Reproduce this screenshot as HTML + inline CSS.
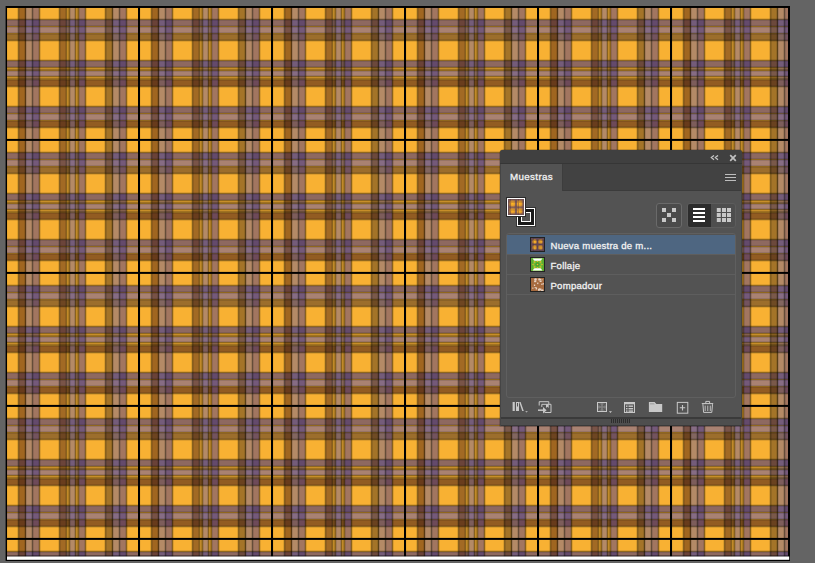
<!DOCTYPE html>
<html><head><meta charset="utf-8">
<style>
html,body{margin:0;padding:0;}
body{width:815px;height:563px;overflow:hidden;background:#646464;position:relative;font-family:"Liberation Sans",sans-serif;}
.a{position:absolute;}
#panel{left:500px;top:150px;width:242px;height:276px;background:#535353;border-radius:3px 3px 0 0;overflow:hidden;box-shadow:0 0 0 0.5px rgba(0,0,0,0.35);}
.lbl{color:#f2f2f2;font-size:9.6px;white-space:nowrap;line-height:12px;-webkit-text-stroke:0.3px #f2f2f2;letter-spacing:0.22px}
</style></head><body>
<svg width="815" height="563" viewBox="0 0 815 563" style="position:absolute;left:0;top:0">
<defs><pattern id="pl" patternUnits="userSpaceOnUse" x="6" y="7" width="133" height="133"><rect width="133" height="133" fill="#f8b133"/><rect x="13" y="0" width="7" height="133" fill="#a06620"/><rect x="20" y="0" width="7" height="133" fill="#b48a66"/><rect x="27" y="0" width="6" height="133" fill="#a27660"/><rect x="54" y="0" width="6" height="133" fill="#a26a24"/><rect x="64" y="0" width="5" height="133" fill="#b48a66"/><rect x="73" y="0" width="6" height="133" fill="#a27660"/><rect x="100" y="0" width="7" height="133" fill="#a47428"/><rect x="107" y="0" width="7" height="133" fill="#b48a66"/><rect x="114" y="0" width="6" height="133" fill="#a27660"/><rect x="0" y="13" width="133" height="6" fill="#8e6960"/><rect x="0" y="20" width="133" height="6" fill="#a98272"/><rect x="0" y="27" width="133" height="6" fill="#9c6e2c"/><rect x="0" y="54" width="133" height="6" fill="#8e6960"/><rect x="0" y="64" width="133" height="5" fill="#a98272"/><rect x="0" y="73" width="133" height="6" fill="#925c22"/><rect x="0" y="100" width="133" height="6" fill="#8e6960"/><rect x="0" y="107" width="133" height="6" fill="#a98272"/><rect x="0" y="114" width="133" height="6" fill="#925c22"/><rect x="13" y="13" width="7" height="6" fill="#6a4238"/><rect x="13" y="20" width="7" height="6" fill="#785246"/><rect x="13" y="27" width="7" height="6" fill="#6d4420"/><rect x="13" y="54" width="7" height="6" fill="#6a4238"/><rect x="13" y="64" width="7" height="5" fill="#785246"/><rect x="13" y="73" width="7" height="6" fill="#683b1b"/><rect x="13" y="100" width="7" height="6" fill="#6a4238"/><rect x="13" y="107" width="7" height="6" fill="#785246"/><rect x="13" y="114" width="7" height="6" fill="#683b1b"/><rect x="20" y="13" width="7" height="6" fill="#745c7a"/><rect x="20" y="20" width="7" height="6" fill="#866c84"/><rect x="20" y="27" width="7" height="6" fill="#826660"/><rect x="20" y="54" width="7" height="6" fill="#745c7a"/><rect x="20" y="64" width="7" height="5" fill="#866c84"/><rect x="20" y="73" width="7" height="6" fill="#7d5d5b"/><rect x="20" y="100" width="7" height="6" fill="#745c7a"/><rect x="20" y="107" width="7" height="6" fill="#866c84"/><rect x="20" y="114" width="7" height="6" fill="#7d5d5b"/><rect x="27" y="13" width="6" height="6" fill="#644a6c"/><rect x="27" y="20" width="6" height="6" fill="#74597a"/><rect x="27" y="27" width="6" height="6" fill="#73535e"/><rect x="27" y="54" width="6" height="6" fill="#644a6c"/><rect x="27" y="64" width="6" height="5" fill="#74597a"/><rect x="27" y="73" width="6" height="6" fill="#6e4a59"/><rect x="27" y="100" width="6" height="6" fill="#644a6c"/><rect x="27" y="107" width="6" height="6" fill="#74597a"/><rect x="27" y="114" width="6" height="6" fill="#6e4a59"/><rect x="54" y="13" width="6" height="6" fill="#6b443a"/><rect x="54" y="20" width="6" height="6" fill="#795448"/><rect x="54" y="27" width="6" height="6" fill="#6e4622"/><rect x="54" y="54" width="6" height="6" fill="#6b443a"/><rect x="54" y="64" width="6" height="5" fill="#795448"/><rect x="54" y="73" width="6" height="6" fill="#693d1d"/><rect x="54" y="100" width="6" height="6" fill="#6b443a"/><rect x="54" y="107" width="6" height="6" fill="#795448"/><rect x="54" y="114" width="6" height="6" fill="#693d1d"/><rect x="64" y="13" width="5" height="6" fill="#745c7a"/><rect x="64" y="20" width="5" height="6" fill="#866c84"/><rect x="64" y="27" width="5" height="6" fill="#826660"/><rect x="64" y="54" width="5" height="6" fill="#745c7a"/><rect x="64" y="64" width="5" height="5" fill="#866c84"/><rect x="64" y="73" width="5" height="6" fill="#7d5d5b"/><rect x="64" y="100" width="5" height="6" fill="#745c7a"/><rect x="64" y="107" width="5" height="6" fill="#866c84"/><rect x="64" y="114" width="5" height="6" fill="#7d5d5b"/><rect x="73" y="13" width="6" height="6" fill="#644a6c"/><rect x="73" y="20" width="6" height="6" fill="#74597a"/><rect x="73" y="27" width="6" height="6" fill="#73535e"/><rect x="73" y="54" width="6" height="6" fill="#644a6c"/><rect x="73" y="64" width="6" height="5" fill="#74597a"/><rect x="73" y="73" width="6" height="6" fill="#6e4a59"/><rect x="73" y="100" width="6" height="6" fill="#644a6c"/><rect x="73" y="107" width="6" height="6" fill="#74597a"/><rect x="73" y="114" width="6" height="6" fill="#6e4a59"/><rect x="100" y="13" width="7" height="6" fill="#6c493c"/><rect x="100" y="20" width="7" height="6" fill="#7a594a"/><rect x="100" y="27" width="7" height="6" fill="#6f4b24"/><rect x="100" y="54" width="7" height="6" fill="#6c493c"/><rect x="100" y="64" width="7" height="5" fill="#7a594a"/><rect x="100" y="73" width="7" height="6" fill="#6a421f"/><rect x="100" y="100" width="7" height="6" fill="#6c493c"/><rect x="100" y="107" width="7" height="6" fill="#7a594a"/><rect x="100" y="114" width="7" height="6" fill="#6a421f"/><rect x="107" y="13" width="7" height="6" fill="#745c7a"/><rect x="107" y="20" width="7" height="6" fill="#866c84"/><rect x="107" y="27" width="7" height="6" fill="#826660"/><rect x="107" y="54" width="7" height="6" fill="#745c7a"/><rect x="107" y="64" width="7" height="5" fill="#866c84"/><rect x="107" y="73" width="7" height="6" fill="#7d5d5b"/><rect x="107" y="100" width="7" height="6" fill="#745c7a"/><rect x="107" y="107" width="7" height="6" fill="#866c84"/><rect x="107" y="114" width="7" height="6" fill="#7d5d5b"/><rect x="114" y="13" width="6" height="6" fill="#644a6c"/><rect x="114" y="20" width="6" height="6" fill="#74597a"/><rect x="114" y="27" width="6" height="6" fill="#73535e"/><rect x="114" y="54" width="6" height="6" fill="#644a6c"/><rect x="114" y="64" width="6" height="5" fill="#74597a"/><rect x="114" y="73" width="6" height="6" fill="#6e4a59"/><rect x="114" y="100" width="6" height="6" fill="#644a6c"/><rect x="114" y="107" width="6" height="6" fill="#74597a"/><rect x="114" y="114" width="6" height="6" fill="#6e4a59"/><rect x="11.75" y="0" width="1.50" height="133" fill="rgba(0,0,0,0.45)"/><rect x="18.75" y="0" width="1.50" height="133" fill="rgba(0,0,0,0.45)"/><rect x="25.75" y="0" width="1.50" height="133" fill="rgba(0,0,0,0.45)"/><rect x="32.75" y="0" width="1.50" height="133" fill="rgba(0,0,0,0.45)"/><rect x="52.75" y="0" width="1.50" height="133" fill="rgba(0,0,0,0.45)"/><rect x="59.75" y="0" width="1.50" height="133" fill="rgba(0,0,0,0.45)"/><rect x="62.75" y="0" width="1.50" height="133" fill="rgba(0,0,0,0.45)"/><rect x="68.75" y="0" width="1.50" height="133" fill="rgba(0,0,0,0.45)"/><rect x="71.75" y="0" width="1.50" height="133" fill="rgba(0,0,0,0.45)"/><rect x="78.75" y="0" width="1.50" height="133" fill="rgba(0,0,0,0.45)"/><rect x="98.75" y="0" width="1.50" height="133" fill="rgba(0,0,0,0.45)"/><rect x="105.75" y="0" width="1.50" height="133" fill="rgba(0,0,0,0.45)"/><rect x="112.75" y="0" width="1.50" height="133" fill="rgba(0,0,0,0.45)"/><rect x="119.75" y="0" width="1.50" height="133" fill="rgba(0,0,0,0.45)"/><rect x="0" y="11.75" width="133" height="1.50" fill="rgba(0,0,0,0.42)"/><rect x="0" y="18.75" width="133" height="1.50" fill="rgba(0,0,0,0.42)"/><rect x="0" y="25.75" width="133" height="1.50" fill="rgba(0,0,0,0.42)"/><rect x="0" y="32.75" width="133" height="1.50" fill="rgba(0,0,0,0.42)"/><rect x="0" y="52.75" width="133" height="1.50" fill="rgba(0,0,0,0.42)"/><rect x="0" y="59.75" width="133" height="1.50" fill="rgba(0,0,0,0.42)"/><rect x="0" y="62.75" width="133" height="1.50" fill="rgba(0,0,0,0.42)"/><rect x="0" y="68.75" width="133" height="1.50" fill="rgba(0,0,0,0.42)"/><rect x="0" y="71.75" width="133" height="1.50" fill="rgba(0,0,0,0.42)"/><rect x="0" y="78.75" width="133" height="1.50" fill="rgba(0,0,0,0.42)"/><rect x="0" y="98.75" width="133" height="1.50" fill="rgba(0,0,0,0.42)"/><rect x="0" y="105.75" width="133" height="1.50" fill="rgba(0,0,0,0.42)"/><rect x="0" y="112.75" width="133" height="1.50" fill="rgba(0,0,0,0.42)"/><rect x="0" y="119.75" width="133" height="1.50" fill="rgba(0,0,0,0.42)"/><rect x="61" y="0" width="1" height="133" fill="rgba(0,0,0,0.12)"/><rect x="62" y="0" width="1" height="133" fill="rgba(0,0,0,0.22)"/><rect x="0" y="61" width="133" height="1" fill="rgba(0,0,0,0.10)"/><rect x="0" y="62" width="133" height="1" fill="rgba(0,0,0,0.28)"/><rect x="70" y="0" width="1" height="133" fill="rgba(0,0,0,0.12)"/><rect x="71" y="0" width="1" height="133" fill="rgba(0,0,0,0.22)"/><rect x="0" y="70" width="133" height="1" fill="rgba(0,0,0,0.10)"/><rect x="0" y="71" width="133" height="1" fill="rgba(0,0,0,0.28)"/><rect x="0" y="0" width="1.05" height="133" fill="#000"/><rect x="132" y="0" width="1" height="133" fill="#000"/><rect x="0" y="0" width="133" height="0.9" fill="#000"/><rect x="0" y="131.9" width="133" height="1.1" fill="#000"/></pattern></defs>
<g><rect x="5.6" y="6" width="784.4" height="555" fill="#000"/>
<rect x="7" y="7.7" width="781" height="548.8" fill="url(#pl)"/>
<rect x="7" y="555.3" width="781" height="1.2" fill="rgba(0,0,0,0.5)"/><rect x="7" y="556.5" width="782.2" height="3.3" fill="#fff"/></g>
</svg>
<div id="panel" class="a">
  <!-- header -->
  <div class="a" style="left:0;top:0;width:242px;height:13px;background:#404040"></div>
  <div class="a" style="left:0;top:13px;width:242px;height:1px;background:#363636"></div>
  <!-- collapse << -->
  <svg class="a" style="left:210px;top:5px" width="10" height="7" viewBox="0 0 10 7">
    <path d="M4 0.4 L1.3 2.6 L4 4.8 M8 0.4 L5.3 2.6 L8 4.8" fill="none" stroke="#c4c4c4" stroke-width="1.25"/>
  </svg>
  <!-- close x -->
  <svg class="a" style="left:229px;top:4px" width="8" height="8" viewBox="0 0 8 8">
    <path d="M1.2 1.2 L6.8 6.8 M6.8 1.2 L1.2 6.8" fill="none" stroke="#c0c0c0" stroke-width="1.7"/>
  </svg>
  <!-- tab row -->
  <div class="a" style="left:0;top:14px;width:242px;height:27px;background:#424242"></div>
  <div class="a" style="left:62px;top:40px;width:180px;height:1px;background:#3b3b3b"></div>
  <div class="a" style="left:62px;top:14px;width:1px;height:27px;background:#3d3d3d"></div>
  <div class="a" style="left:0;top:14px;width:62px;height:28px;background:#535353"></div>
  <div class="a lbl" style="left:10px;top:20.5px;font-size:9.8px;letter-spacing:0.35px">Muestras</div>
  <!-- menu -->
  <div class="a" style="left:225px;top:24px;width:11px;height:1px;background:#bdbdbd"></div>
  <div class="a" style="left:225px;top:27px;width:11px;height:1px;background:#bdbdbd"></div>
  <div class="a" style="left:225px;top:30px;width:11px;height:1px;background:#bdbdbd"></div>

  <!-- fill/stroke icon -->
  <div class="a" style="left:16px;top:57px;width:20px;height:20px;background:#333"></div>
  <div class="a" style="left:17px;top:58px;width:18px;height:18px;background:#fff"></div>
  <div class="a" style="left:18px;top:59px;width:16px;height:16px;background:#1a1a1a"></div>
  <div class="a" style="left:21px;top:62px;width:10px;height:10px;background:#fff"></div>
  <div class="a" style="left:22px;top:63px;width:8px;height:8px;background:#535353"></div>

  <div class="a" style="left:6px;top:47px;width:20px;height:20px;background:#2a2a2a"></div>
  <div class="a" style="left:7px;top:48px;width:18px;height:18px;background:#fff"></div>
  <svg class="a" style="left:8px;top:49px" width="16" height="16" viewBox="0 0 16 16">
    <defs><radialGradient id="ys"><stop offset="0" stop-color="#ffb822"/><stop offset="0.45" stop-color="#e8a030"/><stop offset="1" stop-color="#e8a030" stop-opacity="0"/></radialGradient></defs>
    <rect width="16" height="16" fill="#9a6a3c"/>
    <circle cx="4.5" cy="4.5" r="4.5" fill="url(#ys)"/><circle cx="11.5" cy="4.5" r="4.5" fill="url(#ys)"/>
    <circle cx="4.5" cy="11.5" r="4.5" fill="url(#ys)"/><circle cx="11.5" cy="11.5" r="4.5" fill="url(#ys)"/>
    <g fill="#54406a" opacity="0.55">
    <rect x="0" y="0" width="1.5" height="16"/><rect x="7" y="0" width="2" height="16"/><rect x="14.5" y="0" width="1.5" height="16"/>
    <rect x="0" y="0" width="16" height="1.5"/><rect x="0" y="7.5" width="16" height="2"/><rect x="0" y="14.5" width="16" height="1.5"/>
    </g>
    <g fill="#4a3040" opacity="0.35">
    <rect x="2" y="0" width="1" height="16"/><rect x="10" y="0" width="1" height="16"/>
    <rect x="0" y="2.5" width="16" height="1"/><rect x="0" y="10.5" width="16" height="1"/>
    </g>
  </svg>

  <!-- view buttons -->
  <div class="a" style="left:156px;top:53px;width:24px;height:23px;border:1px solid #6a6a6a;border-radius:3px;background:#4b4b4b"></div>
  <div class="a" style="left:161.5px;top:58px;width:4px;height:4px;background:#c8c8c8"></div>
  <div class="a" style="left:172px;top:58px;width:4px;height:4px;background:#c8c8c8"></div>
  <div class="a" style="left:167px;top:63px;width:4px;height:4px;background:#c8c8c8"></div>
  <div class="a" style="left:161.5px;top:68px;width:4px;height:4px;background:#c8c8c8"></div>
  <div class="a" style="left:172px;top:68px;width:4px;height:4px;background:#c8c8c8"></div>

  <div class="a" style="left:187px;top:53px;width:47px;height:23px;border:1px solid #5c5c5c;border-radius:3px;background:#4e4e4e"></div>
  <div class="a" style="left:188px;top:54px;width:23px;height:23px;background:#2c2c2c;border-radius:2px 0 0 2px"></div>
  <div class="a" style="left:193px;top:58px;width:12px;height:2px;background:#fff"></div>
  <div class="a" style="left:193px;top:62px;width:12px;height:2px;background:#fff"></div>
  <div class="a" style="left:193px;top:66px;width:12px;height:2px;background:#fff"></div>
  <div class="a" style="left:193px;top:70px;width:12px;height:2px;background:#fff"></div>
  <svg class="a" style="left:216px;top:58px" width="16" height="15" viewBox="0 0 16 15">
    <g fill="#c8c8c8">
    <rect x="0.8" y="0" width="4" height="4"/><rect x="6" y="0" width="4" height="4"/><rect x="11" y="0" width="4" height="4"/>
    <rect x="0.8" y="5" width="4" height="4"/><rect x="6" y="5" width="4" height="4"/><rect x="11" y="5" width="4" height="4"/>
    <rect x="0.8" y="10" width="4" height="4"/><rect x="6" y="10" width="4" height="4"/><rect x="11" y="10" width="4" height="4"/>
    </g>
  </svg>

  <!-- list box -->
  <div class="a" style="left:6px;top:83px;width:228px;height:163px;border:1px solid #5f5f5f;border-radius:3px;"></div>
  <div class="a" style="left:7px;top:85px;width:228px;height:19px;background:#4e6681"></div>
  <div class="a" style="left:7px;top:104px;width:228px;height:1px;background:#5e5e5e"></div>
  <div class="a" style="left:7px;top:124px;width:228px;height:1px;background:#5e5e5e"></div>
  <div class="a" style="left:7px;top:144px;width:228px;height:1px;background:#5e5e5e"></div>

  <!-- thumbs -->
  <div class="a" style="left:30px;top:87px;width:15px;height:15px;background:#222"></div>
  <svg class="a" style="left:31px;top:88px" width="13" height="13" viewBox="0 0 16 16">
    <rect width="16" height="16" fill="#7e5840"/>
    <circle cx="4.5" cy="4.5" r="3.6" fill="url(#ys)"/><circle cx="11.5" cy="4.5" r="3.6" fill="url(#ys)"/>
    <circle cx="4.5" cy="11.5" r="3.6" fill="url(#ys)"/><circle cx="11.5" cy="11.5" r="3.6" fill="url(#ys)"/>
    <g fill="#4a3864" opacity="0.55">
    <rect x="0" y="0" width="1.5" height="16"/><rect x="7" y="0" width="2" height="16"/><rect x="14.5" y="0" width="1.5" height="16"/>
    <rect x="0" y="0" width="16" height="1.5"/><rect x="0" y="7" width="16" height="2"/><rect x="0" y="14.5" width="16" height="1.5"/>
    </g>
    <g fill="#3a2830" opacity="0.3">
    <rect x="2.5" y="0" width="1" height="16"/><rect x="10.5" y="0" width="1" height="16"/>
    <rect x="0" y="2.5" width="16" height="1"/><rect x="0" y="10.5" width="16" height="1"/>
    </g>
  </svg>
  <div class="a lbl" style="left:50.5px;top:90px">Nueva muestra de m...</div>

  <div class="a" style="left:30px;top:107px;width:15px;height:15px;background:#222"></div>
  <svg class="a" style="left:31px;top:108px" width="13" height="13" viewBox="0 0 13 13">
    <rect width="13" height="13" fill="#70bc36"/>
    <rect x="0" y="0" width="2" height="13" fill="#5aac30"/><rect x="11" y="0" width="2" height="13" fill="#5aac30"/>
    <path d="M1.5 0.6 H11.5 L9.5 2.8 H3.5 Z" fill="#fff"/>
    <path d="M1.5 12.4 H11.5 L9.5 10.2 H3.5 Z" fill="#fff"/>
    <circle cx="6.5" cy="6.5" r="2.2" fill="#48a030"/>
    <g fill="#f2b424"><circle cx="6.5" cy="6.5" r="0.8"/><circle cx="3.6" cy="4" r="0.8"/><circle cx="9.4" cy="4" r="0.8"/><circle cx="3.6" cy="9" r="0.8"/><circle cx="9.4" cy="9" r="0.8"/>
    <circle cx="2" cy="6.5" r="0.7"/><circle cx="11" cy="6.5" r="0.7"/><circle cx="6.5" cy="3.4" r="0.6"/><circle cx="6.5" cy="9.6" r="0.6"/></g>
  </svg>
  <div class="a lbl" style="left:50.5px;top:110px">Follaje</div>

  <div class="a" style="left:30px;top:127px;width:15px;height:15px;background:#222"></div>
  <svg class="a" style="left:31px;top:128px" width="13" height="13" viewBox="0 0 13 13">
    <rect width="13" height="13" fill="#a66a3e"/>
    <g fill="#f2e6dc" opacity="0.85"><rect x="2.9" y="6.5" width="1.3" height="1.5"/><rect x="7.5" y="0.8" width="0.8" height="1.8"/><rect x="3.1" y="2.8" width="2.2" height="1.4"/><rect x="10.0" y="5.7" width="1.7" height="1.0"/><rect x="7.6" y="10.4" width="1.5" height="1.7"/><rect x="8.1" y="0.8" width="1.9" height="1.5"/><rect x="3.6" y="0.4" width="2.0" height="1.4"/><rect x="8.6" y="10.5" width="1.8" height="1.9"/><rect x="4.7" y="9.6" width="1.4" height="1.9"/><rect x="10.5" y="1.2" width="1.0" height="1.1"/><rect x="11.6" y="5.2" width="1.7" height="1.2"/><rect x="6.1" y="4.6" width="1.3" height="1.5"/><rect x="7.0" y="10.9" width="1.8" height="1.9"/><rect x="10.3" y="11.9" width="1.7" height="1.0"/><rect x="10.3" y="11.6" width="2.1" height="1.5"/><rect x="8.6" y="2.5" width="2.0" height="1.5"/><rect x="3.4" y="0.8" width="2.0" height="2.0"/><rect x="1.1" y="9.6" width="1.4" height="1.0"/><rect x="3.5" y="9.2" width="2.0" height="0.9"/><rect x="7.4" y="0.5" width="1.8" height="1.2"/><rect x="10.6" y="11.8" width="1.5" height="2.0"/><rect x="3.7" y="0.9" width="1.6" height="0.8"/></g>
  </svg>
  <div class="a lbl" style="left:50.5px;top:130px">Pompadour</div>

  <!-- footer icons -->
  <svg class="a" style="left:10.8px;top:250.4px" width="18" height="14" viewBox="0 0 18 14">
    <g fill="#c8c8c8">
    <rect x="1.6" y="2" width="2.2" height="9"/>
    <path d="M5 2 H8 V11 H5 Z M6 3 V6.5 H7 V3 Z" fill-rule="evenodd"/>
    <path d="M8.2 2 L9.6 2 L12.8 11 L11.2 11 Z"/>
    <path d="M14.2 11.2 L16.9 11.2 L15.55 12.6 Z"/>
    </g>
  </svg>
  <svg class="a" style="left:37px;top:250px" width="16" height="15" viewBox="0 0 16 15">
    <g fill="none" stroke="#c8c8c8" stroke-width="1">
    <path d="M2.2 5.5 V1.7 H11.8 V4"/>
    <path d="M4.8 7 V4.3 H14 V12.5 H7.5"/>
    </g>
    <path d="M1 10.2 H7" fill="none" stroke="#c8c8c8" stroke-width="1.5"/>
    <path d="M6 7 L9.6 10.2 L6 13.5 Z" fill="#c8c8c8"/>
    <path d="M9 4.3 H11.7 V8 L10.35 6.8 L9 8 Z" fill="#c8c8c8"/>
  </svg>

  <svg class="a" style="left:95px;top:250px" width="20" height="15" viewBox="0 0 20 15">
    <rect x="3" y="3" width="8" height="8" fill="#6c6c6c"/>
    <path d="M3 3 L7 7 L11 3 M3 11 L7 7 L11 11" stroke="#5a5a5a" stroke-width="1.2" fill="none"/>
    <path d="M7 3 V11 M3 7 H11" stroke="#8c8c8c" stroke-width="1"/>
    <rect x="2.5" y="2.5" width="9" height="9" fill="none" stroke="#c8c8c8" stroke-width="1"/>
    <path d="M13.9 11.2 H17 L15.45 13 Z" fill="#c8c8c8"/>
  </svg>
  <svg class="a" style="left:120px;top:250px" width="18" height="15" viewBox="0 0 18 15">
    <rect x="4.5" y="2.5" width="10" height="10" fill="none" stroke="#c8c8c8" stroke-width="1"/>
    <rect x="4" y="2" width="11" height="2.3" fill="#c8c8c8"/>
    <g fill="#c8c8c8"><rect x="6" y="5.5" width="1.5" height="1.4"/><rect x="6" y="8" width="1.5" height="1.4"/><rect x="6" y="10.4" width="1.5" height="1.4"/>
    <rect x="8.5" y="5.5" width="4.6" height="1.4"/><rect x="8.5" y="8" width="4.6" height="1.4"/><rect x="8.5" y="10.4" width="4.6" height="1.4"/></g>
  </svg>
  <svg class="a" style="left:145px;top:250px" width="18" height="15" viewBox="0 0 18 15">
    <path d="M3.9 2 H9.6 L11.4 4 H17.2 V12.1 H3.9 Z" fill="#c8c8c8"/>
    <path d="M5 3.5 H9 L9.8 4.3 H5 Z" fill="#8a8a8a"/>
  </svg>
  <svg class="a" style="left:176px;top:251px" width="13" height="13" viewBox="0 0 13 13">
    <rect x="1.3" y="1.4" width="10.5" height="10.8" fill="none" stroke="#c8c8c8" stroke-width="1"/>
    <path d="M6.5 4 V9.5 M3.8 6.75 H9.2" stroke="#c8c8c8" stroke-width="1.1"/>
  </svg>
  <svg class="a" style="left:201px;top:250px" width="14" height="14" viewBox="0 0 14 14">
    <g fill="none" stroke="#c8c8c8">
    <path d="M4.8 3 V1.4 H8.6 V3" stroke-width="1"/>
    <path d="M0.8 3.6 H12.2" stroke-width="1.1"/>
    <path d="M1.9 4.2 L2.6 12.4 H10.8 L11.5 4.2" stroke-width="1"/>
    <path d="M4.2 5.6 V11 M6.75 5.6 V11 M9.3 5.6 V11" stroke-width="0.9"/>
    </g>
  </svg>

  <!-- footer bottom -->
  <div class="a" style="left:0;top:267px;width:242px;height:1.5px;background:#3a3a3a"></div>
  <div class="a" style="left:0;top:268.5px;width:242px;height:7px;background:#4e4e4e"></div>
  <div class="a" style="left:0;top:275px;width:242px;height:1px;background:#3a3a3a"></div>
  <div class="a" style="left:0;top:14px;width:1px;height:262px;background:#454545"></div>
  <div class="a" style="left:241px;top:14px;width:1px;height:262px;background:#454545"></div>
  <svg class="a" style="left:111px;top:269px" width="20" height="4" viewBox="0 0 20 4">
    <g fill="#2e2e2e"><rect x="0" width="1" height="4"/><rect x="2" width="1" height="4"/><rect x="4" width="1" height="4"/><rect x="6" width="1" height="4"/><rect x="8" width="1" height="4"/><rect x="10" width="1" height="4"/><rect x="12" width="1" height="4"/><rect x="14" width="1" height="4"/><rect x="16" width="1" height="4"/><rect x="18" width="1" height="4"/></g>
  </svg>
</div>
</body></html>
